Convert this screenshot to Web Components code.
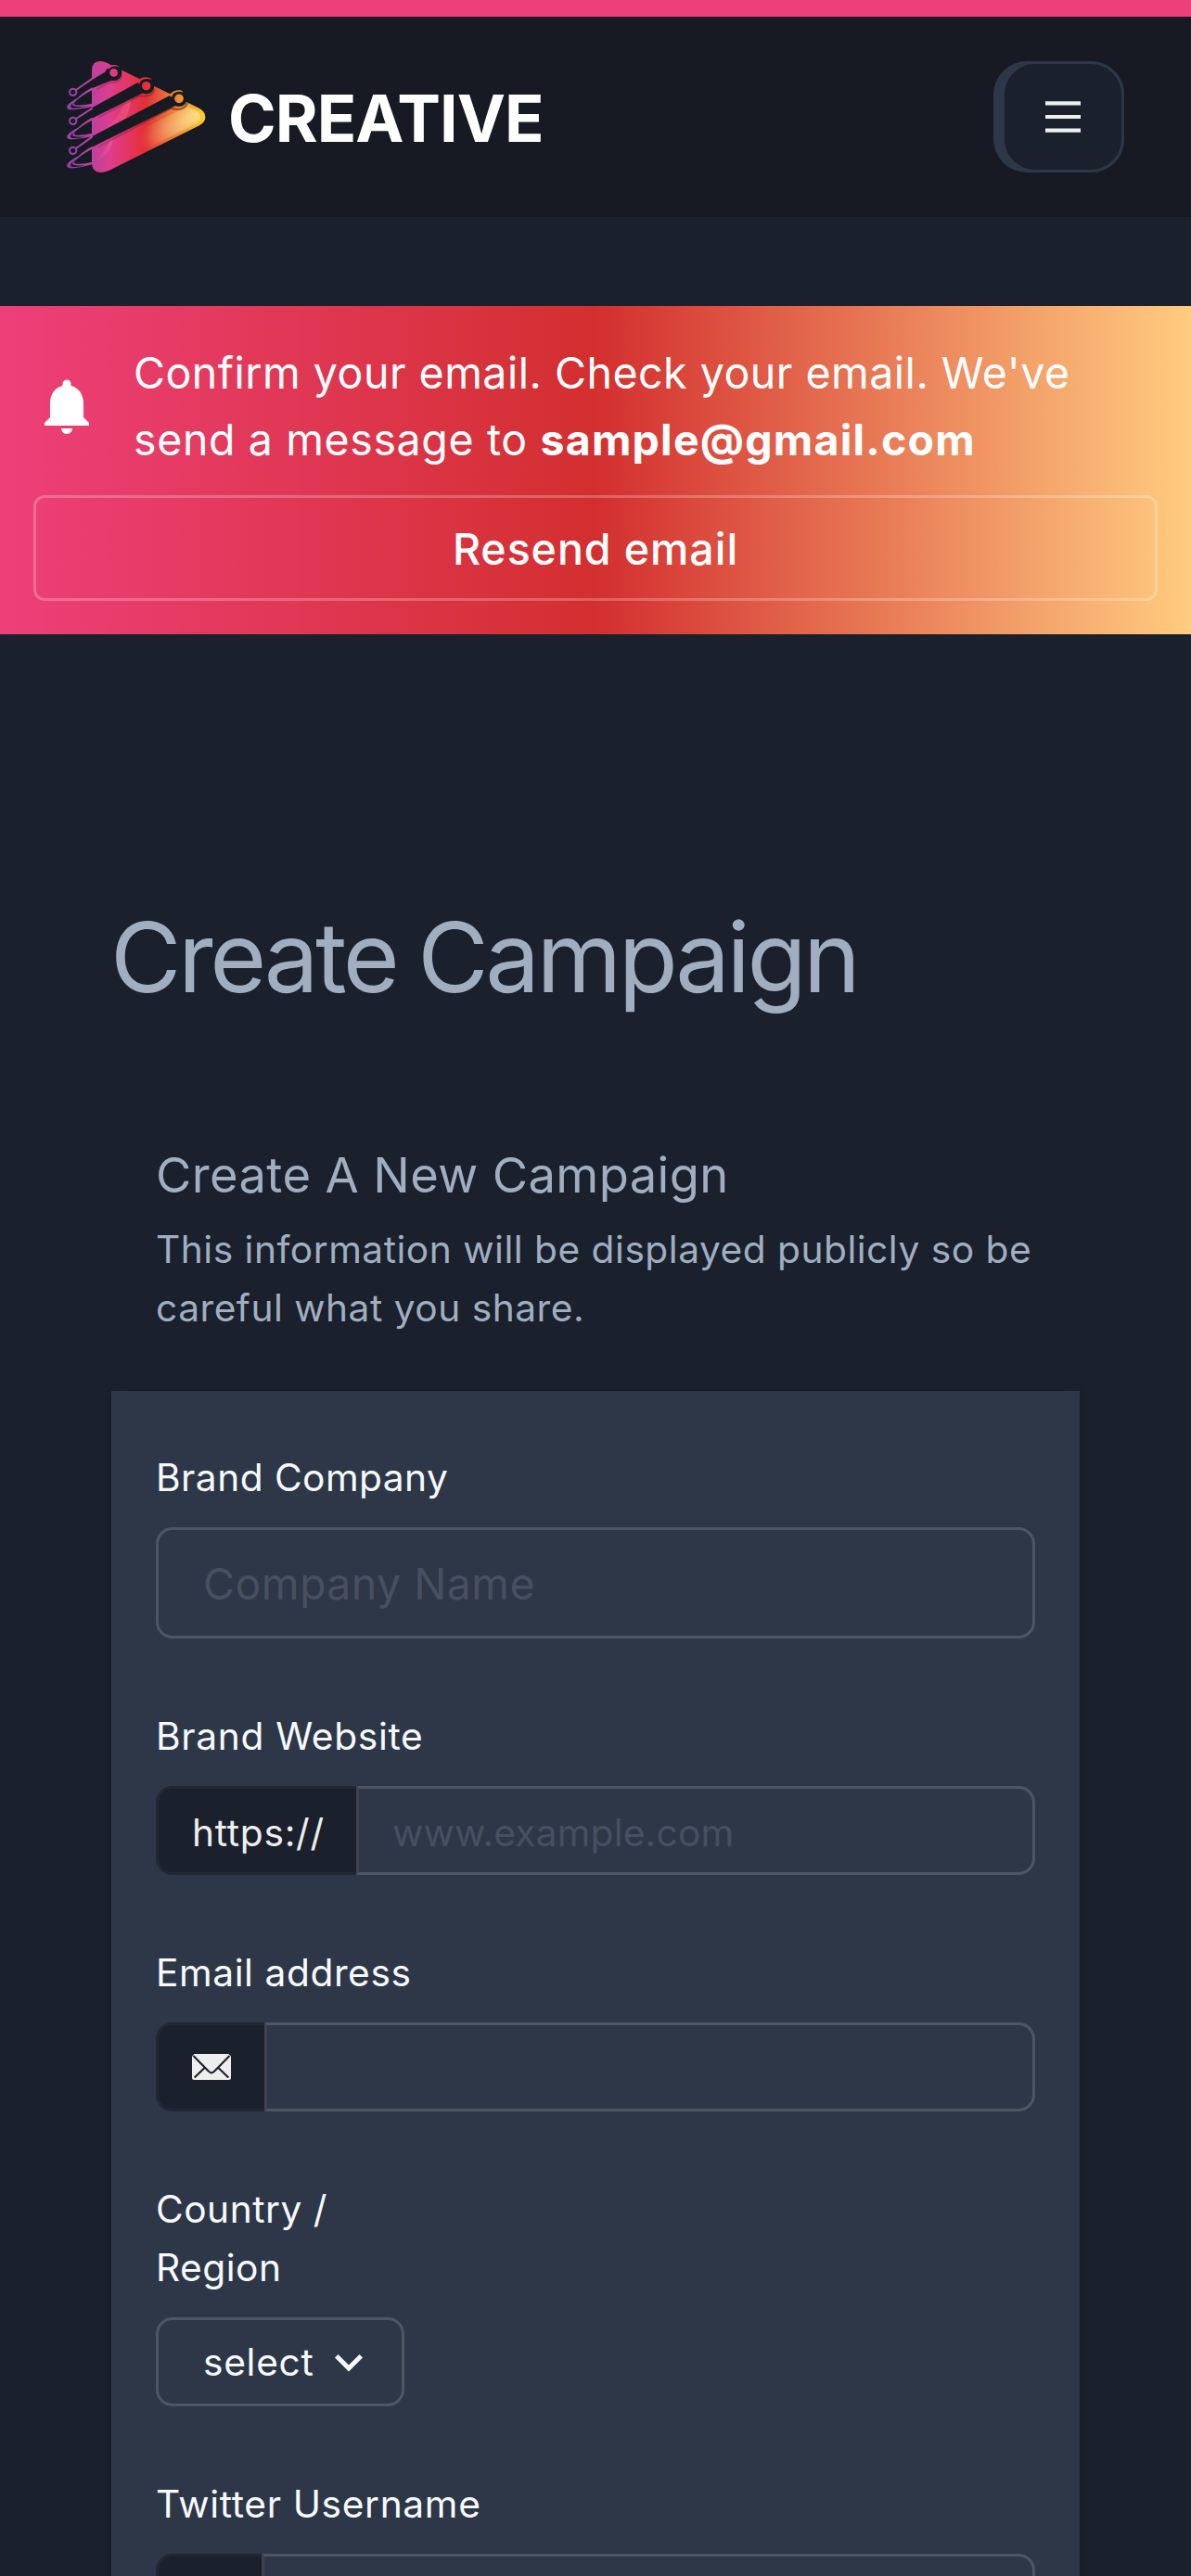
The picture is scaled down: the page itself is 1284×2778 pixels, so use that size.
<!DOCTYPE html>
<html lang="en">
<head>
<meta charset="utf-8">
<title>Create Campaign</title>
<style>
  html, body { margin: 0; background: #1a202c; }
  body { height: 2778px; overflow: hidden; font-family: Inter, "Liberation Sans", sans-serif; color: #f7fafc; }
</style>
</head>
<body>
<campaign-page>
  <site-header slot="header">CREATIVE</site-header>
  <email-alert slot="alert" action="Resend email">Confirm your email. Check your email. We've<br><span style="letter-spacing:.62px">send a message to </span><strong>sample@gmail.com</strong></email-alert>
  <page-title slot="title">Create Campaign</page-title>
  <section-intro slot="intro">
    <span slot="heading">Create A New Campaign</span>
    This information will be displayed publicly so be<br>careful what you share.
  </section-intro>
  <form-card>
    <form-field label="Brand Company" style="--ls:.45px">
      <text-input size="lg" placeholder="Company Name"></text-input>
    </form-field>
    <form-field label="Brand Website" style="--ls:.66px">
      <text-input placeholder="www.example.com"><input-addon slot="addon" style="width:216px">https://</input-addon></text-input>
    </form-field>
    <form-field label="Email address" style="--ls:.57px">
      <text-input><input-addon slot="addon" style="width:117px"><mail-icon></mail-icon></input-addon></text-input>
    </form-field>
    <form-field label="Country / Region" style="--ls:.5px;--label-width:268px">
      <select-box>select</select-box>
    </form-field>
    <form-field label="Twitter Username" style="--ls:.64px">
      <text-input><input-addon slot="addon" style="width:114px"></input-addon></text-input>
    </form-field>
  </form-card>
</campaign-page>

<script>
const define = (name, markup, setup) => customElements.define(name, class extends HTMLElement {
  connectedCallback() {
    if (this.shadowRoot) return;
    const root = this.attachShadow({ mode: 'open' });
    const template = document.createElement('template');
    template.innerHTML = markup;
    root.append(template.content.cloneNode(true));
    if (setup) setup(this, root);
  }
});

define('campaign-page', `
<style>
  :host { display: flex; flex-direction: column; border-top: 18px solid #ed407a; }
  .alert { margin-top: 96px; }
  main { display: flex; flex-direction: column; padding: 283px 120px 0; }
  .intro { margin-top: 134px; margin-bottom: 58px; }
</style>
<slot name="header"></slot>
<div class="alert"><slot name="alert"></slot></div>
<main>
  <slot name="title"></slot>
  <div class="intro"><slot name="intro"></slot></div>
  <slot></slot>
</main>`);

define('brand-logo', `
<style>:host { display: block; width: 190px; height: 150px; } svg { display: block; }</style>
<svg width="190" height="150" viewBox="0 0 570 450" fill="none">
  <defs>
    <linearGradient id="body" gradientUnits="userSpaceOnUse" x1="66" y1="0" x2="514" y2="0">
      <stop offset="0" stop-color="#8d45a8"/><stop offset=".17" stop-color="#b9429f"/>
      <stop offset=".31" stop-color="#df3c8d"/><stop offset=".45" stop-color="#e53560"/>
      <stop offset=".57" stop-color="#e32f35"/><stop offset=".7" stop-color="#e8663a"/>
      <stop offset=".84" stop-color="#f09a38"/><stop offset="1" stop-color="#fbd02f"/>
    </linearGradient>
    <radialGradient id="glow" gradientUnits="userSpaceOnUse" cx="0" cy="0" r="1" gradientTransform="translate(478 224) rotate(-29) scale(200 78)">
      <stop offset="0" stop-color="#fff0b8" stop-opacity=".65"/><stop offset=".5" stop-color="#ffe0a0" stop-opacity=".36"/>
      <stop offset="1" stop-color="#ffd080" stop-opacity="0"/>
    </radialGradient>
    <linearGradient id="sheen" x1="0" y1="0" x2="1" y2="0">
      <stop offset="0" stop-color="#fff" stop-opacity="0"/><stop offset="1" stop-color="#fff" stop-opacity=".13"/>
    </linearGradient>
    <linearGradient id="shade" gradientUnits="userSpaceOnUse" x1="160" y1="0" x2="440" y2="0">
      <stop offset="0" stop-color="#6b1935" stop-opacity=".25"/><stop offset="1" stop-color="#6b1f25" stop-opacity=".6"/>
    </linearGradient>
    <clipPath id="tri"><path d="M147 76Q147 48 176 48Q188 48 202 56L494 200Q514 211 514 228Q514 246 495 256L202 402Q188 408 176 408Q147 407 147 378Z"/></clipPath>
  </defs>
  <path fill="url(#body)" d="M147 76Q147 48 176 48Q188 48 202 56L494 200Q514 211 514 228Q514 246 495 256L202 402Q188 408 176 408Q147 407 147 378Z"/>
  <g clip-path="url(#tri)">
    <path fill="url(#glow)" d="M200 394L484 250Q499 242 499 228Q499 216 486 209L456 194L180 330Z"/>
    <path fill="url(#sheen)" d="M190 260Q240 230 252 180L275 160Q268 240 225 270L180 292Z"/>
    <path fill="url(#sheen)" d="M155 372Q190 340 205 305L216 299Q210 345 165 372Z"/>
    <g stroke="url(#shade)" stroke-width="7" stroke-linecap="round">
      <path d="M165 138L204 116Q238 120 242 96"/>
      <path d="M170 229L300 160Q345 165 348 140"/>
      <path d="M170 324L402 200Q445 212 455 184"/>
    </g>
  </g>
  <g fill="#181a23">
    <path d="M205 72L147 104V136L216 108Z"/><circle cx="218" cy="85" r="26"/>
    <path d="M308 110L147 199V233L314 150Z"/><circle cx="323" cy="128" r="26"/>
    <path d="M412 152L147 292V326L418 192Z"/><circle cx="429" cy="169" r="26"/>
    <path d="M218 59A26 26 0 0 1 243 77L246 88L232 62ZM323 102A26 26 0 0 1 348 120L353 135L340 108ZM429 143A26 26 0 0 1 454 161L460 181L444 150Z"/>
  </g>
  <g fill="url(#body)">
    <circle cx="218" cy="85" r="13"/><circle cx="323" cy="128" r="14"/><circle cx="429" cy="169" r="14.500"/>
    <path d="M193 72Q206 58 222 60Q231 61 237 68Q217 58 202 73Z"/>
    <path d="M294 115Q304 98 326 100Q336 102 342 109Q321 100 306 111L300 122Z"/>
    <path d="M397 158Q410 141 432 142Q439 143 443 149Q423 141 410 154L405 164Z"/>
  </g>
  <g stroke="url(#body)" stroke-width="6">
    <circle cx="86" cy="148" r="11"/><path d="M96 141L149 104L190 79"/>
    <circle cx="86" cy="241" r="11"/><path d="M96 234L149 200"/>
    <circle cx="86" cy="337" r="11"/><path d="M96 330L149 292"/>
  </g>
  <g fill="url(#body)">
    <path d="M112 162Q67 183 66 197Q68 207 94 204Q122 201 148 196V185Q118 192 96 190Q84 188 92 180Q114 159 148 142V133Q110 154 91 178Q80 188 87 193Q115 198 135 193Q108 201 84 200Q64 196 112 162Z"/>
    <path d="M112 259Q67 280 66 293Q68 303 94 300Q122 297 148 292V281Q118 289 96 287Q84 285 92 277Q114 256 148 239V230Q110 251 91 275Q80 285 87 290Q115 295 135 290Q108 298 84 297Q64 293 112 259Z"/>
    <path d="M112 351Q67 372 66 386Q68 396 94 393Q122 390 148 382V374Q118 382 96 380Q84 378 92 370Q114 349 148 332V323Q110 344 91 368Q80 378 87 383Q115 388 135 383Q108 391 84 390Q64 386 112 351Z"/>
  </g>
</svg>`);

define('menu-button', `
<style>
  :host { display: flex; box-sizing: border-box; width: 141px; height: 120px; padding-left: 9px; background: #2d3748; border-radius: 36px; }
  button { flex: 1; display: flex; align-items: center; justify-content: center; margin: 0; padding: 0 3px 0 0; background: #1a202c; border: 3px solid #2d3748; border-radius: 36px; }
  svg { display: block; margin: 0 0 0 2px; }
</style>
<button aria-label="Menu"><svg width="38" height="34" viewBox="0 0 38 34" fill="#efeff0"><path d="M0 .2h38v4.300H0zM0 14.900h38v4.200H0zM0 29.400h38v4.300H0z"/></svg></button>`);

define('site-header', `
<style>
  :host { display: flex; align-items: flex-start; height: 216px; background: #171923; box-sizing: border-box; padding: 32px 72px 0 50px; }
  .name { margin: 36px auto 0 6px; font: 700 70px/84px Inter, sans-serif; letter-spacing: -.99px; color: #fff; }
  menu-button { margin-top: 16px; }
</style>
<brand-logo></brand-logo><div class="name"><slot></slot></div><menu-button></menu-button>`);

define('email-alert', `
<style>
  :host { display: flex; flex-direction: column; gap: 24px; box-sizing: border-box; height: 354px; padding: 36px; color: #fff; background: linear-gradient(90deg, #ed407a, #d32f2f 50%, #ffcc80); font-size: 46.5px; line-height: 72px; }
  .row { display: flex; align-items: center; gap: 36px; height: 144px; }
  svg { display: block; flex: none; }
  .text { white-space: nowrap; letter-spacing: .5px; }
  ::slotted(strong) { font-weight: 700; letter-spacing: 1.2px; }
  button { display: block; height: 114px; margin: 0; padding: 1px 0 0; color: #fff; font: 500 46.5px/72px Inter, sans-serif; letter-spacing: .95px; background: none; border: 3px solid rgba(255,255,255,.24); border-radius: 12px; }
</style>
<div class="row">
  <svg width="72" height="72" viewBox="0 0 24 24" fill="#fff"><path d="M12 22c1.100 0 2-.9 2-2h-4c0 1.100.89 2 2 2zm6-6v-5c0-3.070-1.640-5.640-4.500-6.320V4c0-.83-.67-1.500-1.500-1.500s-1.500.67-1.500 1.500v.68C7.630 5.360 6 7.920 6 11v5l-2 2v1h16v-1l-2-2z"/></svg>
  <div class="text"><slot></slot></div>
</div>
<button></button>`, (el, root) => { root.querySelector('button').textContent = el.getAttribute('action'); });

define('page-title', `
<style>
  :host { display: block; }
  h1 { margin: 0 0 0 -1px; font: 400 104.7px/130px Inter, sans-serif; letter-spacing: -3.5px; word-spacing: -3px; color: #a0aec0; white-space: nowrap; }
</style>
<h1><slot></slot></h1>`);

define('section-intro', `
<style>
  :host { display: block; padding: 0 0 0 48px; color: #a0aec0; white-space: nowrap; }
  h3 { margin: 0 0 13px 0; font: 400 52.5px/72px Inter, sans-serif; letter-spacing: .38px; }
  p { margin: 0; font-size: 40.7px; line-height: 63px; letter-spacing: .5px; white-space: normal; }
</style>
<h3><slot name="heading"></slot></h3>
<p><slot></slot></p>`);

define('form-card', `
<style>
  :host { display: flex; flex-direction: column; gap: 72px; height: 1278px; box-sizing: border-box; padding: 60px 48px; background: #2d3748; box-shadow: 0 3px 9px rgba(0,0,0,.1), 0 3px 6px rgba(0,0,0,.06); }
</style>
<slot></slot>`);

define('form-field', `
<style>
  :host { display: flex; flex-direction: column; gap: 24px; }
  label { display: block; width: var(--label-width, auto); padding-top: 2px; margin-bottom: -2px; font-size: 40.7px; line-height: 63px; letter-spacing: var(--ls); }
</style>
<label></label><slot></slot>`, (el, root) => { root.querySelector('label').textContent = el.getAttribute('label'); });

define('text-input', `
<style>
  :host { display: flex; height: 96px; color: #474f60; --edge: #4d5663; font-size: 40.7px; letter-spacing: .18px; }
  :host([size=lg]) { height: 120px; font-size: 46.5px; letter-spacing: .45px; }
  .box { flex: 1; display: flex; align-items: center; box-sizing: border-box; padding: 1px 0 0 48px; border: 3px solid var(--edge); border-radius: 18px; }
  .box.joined { padding: 4px 0 0 36px; border-left-color: #40434f; border-radius: 0 18px 18px 0; }
</style>
<slot name="addon"></slot><div class="box"><span></span></div>`, (el, root) => {
  root.querySelector('span').textContent = el.getAttribute('placeholder') || '';
  if (el.querySelector('[slot=addon]')) root.querySelector('.box').classList.add('joined');
});

define('input-addon', `
<style>
  :host { display: flex; align-items: center; flex: none; box-sizing: border-box; padding: 4px 0 0 36px; background: #1a202c; border: 3px solid #212733; border-right: 0; border-radius: 18px 0 0 18px; color: #eeeeec; font-size: 40.7px; letter-spacing: .72px; }
</style>
<slot></slot>`);

define('mail-icon', `
<style>:host { display: block; } svg { display: block; margin-top: -4px; }</style>
<svg width="42" height="28" viewBox="0 0 42 28"><path fill="#eeeeec" d="M2.500 0H39.500L42 2.500V25.500Q42 28 39.500 28H2.500Q0 28 0 25.500V2.500Z"/><path d="M1.500 2L17.700 18.400Q21 22.300 24.300 18.400L40.500 2M2.700 25.600L13.300 15.200M39.300 25.600L28.700 15.200" fill="none" stroke="#1a202c" stroke-width="2.100"/></svg>`);

define('select-box', `
<style>
  :host { display: flex; align-items: center; gap: 22px; width: 268px; height: 96px; box-sizing: border-box; padding: 0 0 0 48px; border: 3px solid #4d5663; border-radius: 18px; font-size: 40.7px; letter-spacing: .7px; }
  svg { display: block; margin-top: 2px; }
</style>
<span><slot></slot></span>
<svg width="30" height="19" viewBox="0 0 30 19" fill="#f7fafc"><path d="M3.500 0L15 11.500L26.500 0L30 3.500L15 18.500L0 3.500Z"/></svg>`);
</script>
</body>
</html>
